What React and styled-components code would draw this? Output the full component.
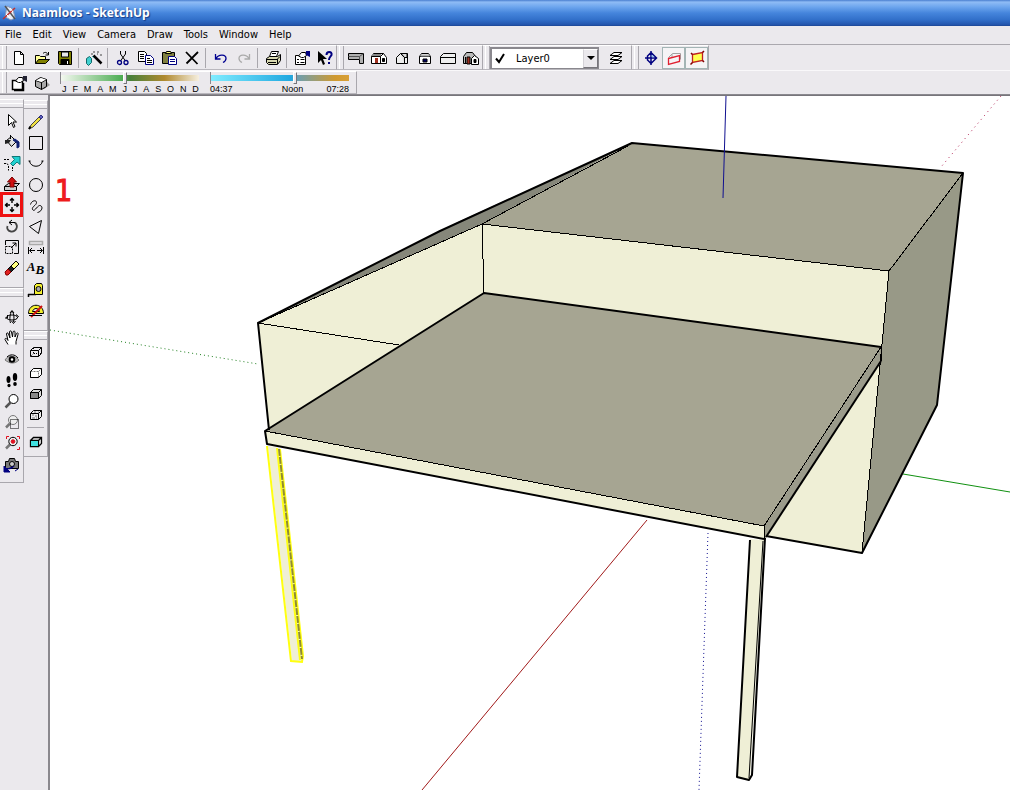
import React, { useState } from "react";
import styled, { createGlobalStyle } from "styled-components";

const GlobalStyle = createGlobalStyle`
  * {
    box-sizing: border-box;
  }
  body {
    margin: 0;
    font-family: "DejaVu Sans Condensed", "DejaVu Sans", sans-serif;
    font-size: 11px;
    color: #000;
  }
  button, select {
    font: inherit;
    color: inherit;
  }
`;

const Window = styled.div`
  display: flex;
  flex-direction: column;
  height: 100vh;
  overflow: hidden;
  background: #ebe9ed;
`;

const TitleBar = styled.header`
  display: flex;
  align-items: center;
  gap: 4px;
  height: 26px;
  flex: none;
  padding: 0 2px;
  background: linear-gradient(
    #4a7fd0 0%,
    #8fbcf5 8%,
    #6ea6ee 26%,
    #4585dc 50%,
    #3270ca 75%,
    #2456ae 94%,
    #1d4694 100%
  );
`;

const Title = styled.h1`
  margin: 0;
  font-family: "Open Sans", sans-serif;
  font-size: 12px;
  line-height: 16px;
  font-weight: 700;
  color: #fff;
  text-shadow: 1px 1px 1px #173c86;
`;

const MenuBar = styled.nav`
  display: flex;
  flex: none;
  gap: 1px;
  height: 19px;
  border-bottom: 1px solid #aaa8ae;
`;

const MenuItem = styled.button`
  border: none;
  background: none;
  padding: 0 5px;
  line-height: 18px;
`;

const ToolbarRow = styled.div`
  display: flex;
  flex: none;
  height: ${({ $height }) => $height}px;
  border-bottom: 1px solid ${({ $last }) => ($last ? "#8a888e" : "#f9f8fa")};
`;

const Toolbar = styled.div`
  display: flex;
  align-items: center;
  padding: 0 ${({ $end }) => $end || 0}px 0 2px;
  border-top: 1px solid #fff;
  border-right: 1px solid #a9a7ad;
  border-bottom: 1px solid #b9b7bd;

  &::before {
    content: "";
    align-self: stretch;
    width: 3px;
    border-left: 1px solid #fff;
    border-right: 1px solid #a9a7ad;
  }
`;

const Tool = styled.button`
  position: relative;
  display: flex;
  align-items: center;
  justify-content: center;
  width: 23px;
  height: ${({ $rail }) => ($rail ? 21 : 22)}px;
  flex: none;
  padding: 0;
  border: 1px solid ${({ $pressed }) => ($pressed ? "#a3b5b5" : "transparent")};
  background: ${({ $pressed }) => ($pressed ? "#f5f4f6" : "none")};

  &::after {
    content: "";
    display: ${({ $marked }) => ($marked ? "block" : "none")};
    position: absolute;
    inset: -3px -1px;
    border: 3px solid #ee1111;
  }
`;

const Separator = styled.span`
  width: ${({ $wide }) => ($wide ? "auto" : "1px")};
  height: ${({ $wide }) => ($wide ? "1px" : "20px")};
  margin: ${({ $wide }) => ($wide ? "2px 3px 3px" : "0 3px 0 2px")};
  background: #a9a7ad;
  flex: none;
`;

const Glyph = styled.svg`
  display: block;
  width: 16px;
  height: 16px;
  flex: none;
  overflow: visible;
  fill: none;
  stroke: #000;
`;

const LayerBox = styled.label`
  display: flex;
  align-items: center;
  width: 109px;
  height: 22px;
  margin-right: 5px;
  border: 1px solid #8a888e;
  border-top-width: 2px;
  border-left-width: 2px;
  background: #fff;
`;

const LayerSelect = styled.select`
  appearance: none;
  flex: 1;
  min-width: 0;
  height: 18px;
  padding: 0 0 0 8px;
  border: none;
  background: none;
  outline: none;
`;

const DropArrow = styled.span`
  display: flex;
  align-items: center;
  justify-content: center;
  width: 15px;
  height: 19px;
  background: #ebe9ed;
  border: 1px solid #77757b;
  border-top-color: #fff;
  border-left-color: #d5d3d8;

  &::after {
    content: "";
    border: 4px solid transparent;
    border-top-color: #000;
    border-bottom: none;
  }
`;

const ShadowSlider = styled.label`
  display: flex;
  flex-direction: column;
  width: 139px;
  margin-left: ${({ $gap }) => $gap}px;
`;

const Range = styled.input`
  appearance: none;
  width: 100%;
  height: 12px;
  margin: 0;
  background: ${({ $track }) => $track} 0 3px / 100% 6px no-repeat;
  border-left: 1px solid #8a888e;

  &::-webkit-slider-thumb {
    appearance: none;
    width: 4px;
    height: 12px;
    background: #ebe9ed;
    border: 1px solid #fff;
    border-right-color: #77757b;
    border-bottom-color: #77757b;
  }
`;

const Scale = styled.span`
  display: flex;
  justify-content: space-between;
  padding-left: ${({ $inset }) => $inset}px;
  font-family: "Liberation Sans", sans-serif;
  font-size: 9px;
  line-height: 10px;
`;

const Body = styled.div`
  display: flex;
  flex: 1;
  min-height: 0;
`;

const Rail = styled.aside`
  display: flex;
  flex-direction: column;
  width: ${({ $width }) => $width}px;
  flex: none;
  padding-top: ${({ $top }) => $top}px;
`;

const RailGroup = styled.div`
  display: flex;
  flex-direction: column;
  padding-bottom: ${({ $end }) => $end}px;
  border-top: 1px solid #fff;
  border-right: 1px solid #a9a7ad;
  border-bottom: 1px solid #a9a7ad;

  &::before {
    content: "";
    height: 3px;
    margin: 3px 0 ${({ $lead }) => $lead}px;
    border-top: 1px solid #fff;
    border-bottom: 1px solid #a9a7ad;
  }
`;

const Viewport = styled.main`
  flex: 1;
  min-width: 0;
  overflow: hidden;
  background: #fff;
  border-top: 1px solid #77757b;
  border-left: 2px solid #8a888e;
`;

const Drawing = styled.svg`
  display: block;
  width: 100%;
  height: 100%;
`;

const cubeFront = "M2.5 6.5h8v6h-8zM2.5 6.5l3-3h8v6l-3 3M10.5 6.5l3-3";

const glyphs = {
  app: (
    <>
      <path d="M5 1l6 3 2 9-4 2-6-3z" fill="#e8eef8" stroke="#8899bb" />
      <path d="M3 1l10 13" stroke="#555" strokeWidth="1.5" />
      <path d="M13 3L1 14" stroke="#c03030" strokeWidth="1.5" />
      <path d="M8 3l3 4M4 9l4 4" stroke="#fff" />
    </>
  ),
  newFile: <path d="M3.5 1.5h6l3 3v10h-9zM9.5 1.5v3h3" fill="#fff" />,
  open: (
    <>
      <path d="M1.5 13.5v-8h4l1 1h5v3" fill="#ffff99" />
      <path d="M1.5 13.5l3-4h11l-4 4z" fill="#808000" />
      <path d="M9 3.5c2-2 4-1 5 1M14.5 2v3h-3" />
    </>
  ),
  save: (
    <>
      <path d="M1.5 1.5h13v13h-12l-1-1z" fill="#808000" />
      <path d="M4.5 2h7v5h-7z" fill="#e8e8e8" />
      <path d="M4 9.5h8v5H4z" fill="#000" />
      <path d="M10 11h1v3h-1z" fill="#fff" stroke="none" />
    </>
  ),
  wand: (
    <>
      <path d="M0.5 8.5l3-2 2 2v4l-3 3-2-2z" fill="#40d0d0" stroke="#106868" />
      <path d="M7.5 5.5l8 8" strokeWidth="2.5" />
      <path d="M8 1v2M12 1v2M5 4h2M14 5h2M11 4h1" stroke="#444" />
      <path d="M6 6l2 2" stroke="#40a0a0" />
    </>
  ),
  cut: (
    <>
      <path d="M5.5 1v3l5 7M10.5 1v3l-5 7" />
      <circle cx="4.5" cy="12.5" r="2" stroke="#000080" strokeWidth="1.3" />
      <circle cx="11" cy="12.5" r="2" stroke="#000080" strokeWidth="1.3" />
    </>
  ),
  copy: (
    <>
      <path d="M0.5 1.5h6l2 2v8h-8z" fill="#fff" />
      <path d="M2 4.5h4M2 6.5h4M2 8.5h4" />
      <path d="M7.5 5.5h5l3 3v6h-8z" fill="#fff" stroke="#000080" />
      <path d="M9 8.5h3M9 10.5h5M9 12.5h5" />
    </>
  ),
  paste: (
    <>
      <path d="M1.5 2.5h12v11h-12z" fill="#808040" />
      <path d="M4.5 3.5l1-2h4l1 2z" fill="#ffff80" />
      <path d="M7.5 6.5h6l2 2v6h-8z" fill="#fff" stroke="#000080" />
      <path d="M9 9.5h5M9 11.5h5" stroke="#000080" />
    </>
  ),
  remove: <path d="M2 2l11.5 12M14 2L2.500 13.500" strokeWidth="1.8" />,
  undo: <path d="M2.5 4v5h5M3 8.500c3-5 10-4 10 0 0 2-1 3-3 4" stroke="#000090" strokeWidth="1.3" />,
  redo: <path d="M13.5 4v5h-5M13 8.500c-3-5-10-4-10 0 0 2 1 3 3 4" stroke="#aaa" strokeWidth="1.3" />,
  print: (
    <>
      <path d="M4.5 6.5l2-5h7l-2 5z" fill="#fff" />
      <path d="M1.5 8.5l3-2h8l3-2v6l-3 4h-9l-2-2z" fill="#d8d8b0" />
      <path d="M2 9.5h10l3-3M12.5 9v5M3 12.5h8M7 3.5h4" />
    </>
  ),
  props: (
    <>
      <path d="M1.5 5.5h10v9h-10z" fill="#fff" />
      <path d="M3 9.5h2M6.5 9.5h4M3 12.5h2M6.5 12.5h4" />
      <path d="M4.5 6l3-3.500h4l1 3-3 2h-2z" fill="#fff" />
      <path d="M12 1h4v6l-4-2z" fill="#000080" stroke="none" />
    </>
  ),
  propsDark: (
    <>
      <path d="M1.5 5.5h10v9h-10z" fill="#fff" strokeWidth="1.5" />
      <path d="M12.5 8v7.500H3" strokeWidth="1.5" />
      <path d="M4.5 6l3-3.500h4l1 3-3 2h-2z" fill="#fff" />
      <path d="M12 1h4v6l-4-2z" fill="#223" stroke="none" />
    </>
  ),
  help: (
    <>
      <path d="M1 1v12l3-3 2 5 2-1-2-5h4z" fill="#000" stroke="none" />
      <path d="M9.5 5c0-4 6-4 5 0-1 2-2.500 2-2.500 5M12 12v2" stroke="#000080" strokeWidth="2" />
    </>
  ),
  viewSlab: (
    <>
      <path d="M0.5 3.5h15v10h-4v-4h-11z" fill="#b0b0b0" />
      <path d="M0.5 6.5h11v3M11.5 6.5l4-3" stroke="#555" />
    </>
  ),
  viewHouse: (
    <>
      <path d="M0.5 6.5l2-3h10l3 4v6h-15zM0.5 6.5h9l3-3M9.5 6.5v7" fill="#fff" />
      <path d="M1 4h9v2H1z" fill="#888" stroke="none" />
      <path d="M4 8h3v5H4z" fill="#a03020" stroke="none" />
      <path d="M11.5 8.5h2v3h-2z" fill="#000" />
    </>
  ),
  viewSide: (
    <>
      <path d="M2.5 13.5v-6l4-4h7v10z" fill="#eee" />
      <path d="M6.500 3.500l4 4v6M7 3.500h6v4h-2.500z" fill="#ddd" />
    </>
  ),
  viewFront: (
    <>
      <path d="M2.5 6.5l2-3h7l2 3v7h-11zM2.5 6.5h11" fill="#fff" />
      <path d="M3.5 4.5h9v2h-9z" fill="#aaa" stroke="none" />
      <path d="M6 9h4v3H6z" fill="#000060" />
    </>
  ),
  viewBack: <path d="M0.5 6.5l3-3h12v10h-15zM0.5 7.5h15" fill="#eee" />,
  viewAll: (
    <>
      <path d="M0.5 6.5l3-4h6l3 4v7h-12z" fill="#bbb" />
      <path d="M8.5 8.5l3-3 4 3v6h-7z" fill="#fff" />
      <path d="M4 7h3v7H4z" fill="#a03020" />
      <path d="M11 9.5h2v3h-2zM2.5 7v6" fill="#000" />
    </>
  ),
  check: <path d="M4 8.5l3 3.5 5-8" strokeWidth="2" />,
  layers: (
    <>
      <path d="M2 13.5h8l4-3H6z" fill="#fff" />
      <path d="M2 9.5h8l4-3H6z" fill="#fff" />
      <path d="M2 5.5h8l4-3H6z" fill="#fff" />
    </>
  ),
  section: (
    <>
      <path d="M8 1v14M2 8h12M8 2.5l5.5 5.5L8 13.500 4.500 10V6z" stroke="#000080" strokeWidth="1.5" />
      <path d="M8.700 4.500l3 2.700h-3z" fill="#8fc0e8" stroke="none" />
    </>
  ),
  sectionPlane: (
    <>
      <path d="M2.5 7.5l4-4h8v6M6 4v3" stroke="#a0a0a0" />
      <path d="M2.5 8.5l11-3v6l-11 3z" stroke="#e02030" strokeWidth="1.3" />
    </>
  ),
  sectionCut: (
    <>
      <path d="M3.500 4.500l10-2v8l-10 2z" fill="#ffff50" stroke="#c02020" strokeWidth="1.3" />
      <path d="M1.500 14.500l2-2M13.500 2.500l1.500-1.500M13.500 10.500l1.500 1.500M2 3l1.500 1.500" stroke="#800000" strokeWidth="1.5" />
    </>
  ),
  shadowCube: (
    <>
      <path d="M10 14l6-4-3-3-3 2z" fill="#999" stroke="none" />
      <path d="M1.5 5.5l5-3 6 2v7l-5 3-6-3z" fill="#aaa" />
      <path d="M1.5 5.5l6 2 5-3M7.5 7.5v7" />
      <path d="M2 5.5l5-2.500 5 1.500-4.500 2.500z" fill="#fff" stroke="none" />
    </>
  ),
  select: <path d="M4.5 1.5v11l3-3 2 5 1.5-1-2-4.500h3.500z" fill="#fff" />,
  paint: (
    <>
      <path d="M2.5 6.5l5-4 5 5-5 5z" fill="#e0e0e0" />
      <path d="M11 5l4 3v5l-2 1v-5l-4-3z" fill="#102070" stroke="#102070" />
      <path d="M1 6h6l-2 3-4 1z" fill="#222" stroke="none" />
      <path d="M6.5 1v4" />
    </>
  ),
  followMe: (
    <>
      <path d="M0 4.500h6M8.500 9v7M0 8.500h3l1.500 2v5" strokeDasharray="2 1" />
      <path d="M6.500 8.500l4-4-2.500-3h8v8l-3-2.500-4 4z" fill="#20d0d0" stroke="#107878" />
    </>
  ),
  pushPull: (
    <>
      <path d="M0.5 10.5l4-3h11l-3 3v4h-12zM0.5 10.5h12" fill="#ccc" />
      <path d="M8 1l4.5 5H10v5H6V6H3.5z" fill="#d01010" stroke="#700" />
    </>
  ),
  move: (
    <path d="M8 2v4M8 10v4M2 8h4M10 8h4M6 3.5L8 1.500l2 2M6 12.500l2 2 2-2M3.500 6l-2 2 2 2M12.500 6l2 2-2 2" strokeWidth="1.4" />
  ),
  rotate: (
    <>
      <path d="M11 4.500c4 4 1 9.500-4 9-3-.3-4.500-3-3.500-5.500" stroke="#444" strokeWidth="1.800" />
      <path d="M5 4.500h6M8 2L5 4.500 8 7" />
    </>
  ),
  scale: (
    <>
      <path d="M1.5 6v-4.500h13v13H10" />
      <path d="M1.5 7.5h7v7h-7z" strokeDasharray="2 1" />
      <path d="M7 9l5-5M8.5 4h3.500v3.500" />
    </>
  ),
  eraser: (
    <>
      <path d="M6 7l6-6 3 3-6 6z" fill="#ffff80" />
      <path d="M3 10l4-4 3 3-4 4z" fill="#222" />
      <path d="M1 12l3-3 3 3-3 3H2z" fill="#e02020" stroke="#800" />
    </>
  ),
  orbit: (
    <>
      <ellipse cx="8" cy="8.500" rx="5.500" ry="2.500" />
      <path d="M6.500 14c-1-3-1-9 1.500-12 2 2 2.500 7 1.500 11M6 4l2-2.500L10 4M7.500 12l2 2.500 2-2.500M12 5.500l2.500 2-2 2M3.500 6v3H1" />
    </>
  ),
  pan: (
    <path
      d="M4 14.5L1 9.500c0-2 2-1 3 1L2.500 4c0-1.500 1.500-1.500 2 0L6 8 5.500 2c0-1.500 2-1.500 2 0L8.500 7 9 2c.5-1.500 2-1 2 0v5l1.500-3.500c.5-1 2-1 1.500 1L12 11.500v3"
      fill="#fff"
    />
  ),
  look: (
    <>
      <path d="M1 9c3-5 9-5 14 0-4 4-9 4-14 0z" fill="#bbb" stroke="#777" />
      <circle cx="8" cy="8.500" r="2.300" fill="#fff" strokeWidth="2" />
      <path d="M3 6c3-3 8-3 11 1" />
    </>
  ),
  walk: (
    <g fill="#000" stroke="none">
      <ellipse cx="4.500" cy="7.500" rx="2" ry="3.500" />
      <ellipse cx="5" cy="13.500" rx="1.600" ry="1.800" />
      <ellipse cx="11" cy="5" rx="2.200" ry="4" />
      <ellipse cx="11" cy="12" rx="1.800" ry="2" />
    </g>
  ),
  zoom: (
    <>
      <path d="M6.5 9.5l-5 5" stroke="#555" strokeWidth="2.5" />
      <circle cx="9.5" cy="6" r="4.5" fill="#fff" />
    </>
  ),
  zoomWindow: (
    <>
      <path d="M6 9.5l-4 4" stroke="#777" strokeWidth="2.5" />
      <circle cx="9" cy="6" r="4.5" fill="#eee" stroke="#777" />
      <path d="M6.5 5.5h8v9h-8z" strokeDasharray="1 1" />
    </>
  ),
  zoomExtents: (
    <>
      <path d="M6 9.5l-4 4" stroke="#777" strokeWidth="2.5" />
      <circle cx="9" cy="6.5" r="4.2" fill="#eee" />
      <circle cx="9" cy="6.5" r="1.8" fill="#e01020" stroke="#e01020" />
      <path d="M2.5 4V1.500H5M13 1.500h2.500V4M15.500 12v2.500H13" stroke="#e01020" />
    </>
  ),
  previous: (
    <>
      <path d="M1.5 5.5h3l1-3h5l1 3h3v7h-13z" fill="#777" />
      <circle cx="8" cy="8" r="2.5" fill="#ccc" />
      <path d="M0 10v6h6zM2 13c5 0 7-1 8-3M11 15l3-2" fill="#000080" stroke="#000080" />
    </>
  ),
  pencil: (
    <>
      <path d="M1 15l2-4 9-9 2 2-9 9z" fill="#f0e040" stroke="#444" />
      <path d="M11 3l2-2 2 2-2 2z" fill="#6060c0" stroke="#303080" />
      <path d="M1 15l1.5-2.500" strokeWidth="2" />
    </>
  ),
  rect: <path d="M1.5 1.5h13v13h-13z" />,
  arc: <path d="M1.5 5c1 7 12 7 13 0M0.5 5h2M13.5 5h2" />,
  circle: <circle cx="8" cy="8" r="6.5" />,
  freehand: <path d="M2.500 6.500c1-4 6-5 6-2 0 3-5 4-4 7 2 3 4-3 7-4 4 0 3 6-2 7" />,
  polygon: <path d="M13.5 1.5l-12 6 9 7z" />,
  dimension: (
    <>
      <path d="M1.500 1.500h13v3h-13z" stroke="#aaa" strokeWidth="1.5" />
      <path d="M0.5 7v7M15.5 7v7M2 10.5h5M9 10.5h5M4 8l-2.500 2.500L4 13M12 8l2.500 2.500L12 13" />
    </>
  ),
  tape: (
    <>
      <path d="M0 12.500h8M0.500 12v3" strokeWidth="1.5" />
      <path d="M6.500 12.500v-9l2-2h5l1 2v9z" fill="#f4f030" />
      <circle cx="10.5" cy="7" r="2.5" fill="#aaa" />
    </>
  ),
  protractor: (
    <>
      <path d="M0.5 10.5c0-11 15-11 15 0zM4.5 8.500h7c-1-4-6-4-7 0z" fill="#f4f030" />
      <path d="M14 3L3 14" stroke="#d01010" strokeWidth="2" />
      <path d="M1 12.5h13" />
    </>
  ),
  cubeXray: (
    <>
      <path d={cubeFront} />
      <path d="M5.5 4v5.500h8M5.500 9.500l-3 3" strokeDasharray="1 1" />
    </>
  ),
  cubeHidden: (
    <>
      <path d={cubeFront} fill="#fff" stroke="#777" strokeDasharray="2 1" />
      <path d="M2.5 6.500v6h8l3-3v-6h-8l-3 3" />
    </>
  ),
  cubeShaded: (
    <>
      <path d={cubeFront} fill="#ddd" />
      <path d="M2.5 6.5h8v6h-8z" fill="#888" />
    </>
  ),
  cubeTexture: (
    <>
      <path d={cubeFront} fill="#eee" />
      <path d="M4 8h2M7 9h2M4 11h3M8 11h1M6 5h2M10 5h1" stroke="#777" />
    </>
  ),
  cubeCyan: (
    <>
      <path d={cubeFront} fill="#eee" strokeWidth="1.3" />
      <path d="M3 7h7v5H3z" fill="#40e0e0" stroke="none" />
    </>
  ),
};

const standardTools = [
  ["newFile", "New"],
  ["open", "Open"],
  ["save", "Save"],
  null,
  ["wand", "Make Component"],
  null,
  ["cut", "Cut"],
  ["copy", "Copy"],
  ["paste", "Paste"],
  ["remove", "Erase"],
  null,
  ["undo", "Undo"],
  ["redo", "Redo"],
  null,
  ["print", "Print"],
  null,
  ["props", "Model Info"],
  ["help", "Context Help"],
];
const viewTools = [
  ["viewSlab", "Iso"],
  ["viewHouse", "Top"],
  ["viewSide", "Front"],
  ["viewFront", "Right"],
  ["viewBack", "Back"],
  ["viewAll", "Left"],
];
const shadowTools = [
  ["propsDark", "Shadow Settings"],
  ["shadowCube", "Display Shadows"],
];
const modifyTools = [
  ["select", "Select"],
  ["paint", "Paint Bucket"],
  ["followMe", "Follow Me"],
  ["pushPull", "Push/Pull"],
  ["move", "Move"],
  ["rotate", "Rotate"],
  ["scale", "Scale"],
  ["eraser", "Eraser"],
];
const cameraTools = [
  ["orbit", "Orbit"],
  ["pan", "Pan"],
  ["look", "Look Around"],
  ["walk", "Walk"],
  ["zoom", "Zoom"],
  ["zoomWindow", "Zoom Window"],
  ["zoomExtents", "Zoom Extents"],
  ["previous", "Previous"],
];
const drawTools = [
  ["pencil", "Line"],
  ["rect", "Rectangle"],
  ["arc", "Arc"],
  ["circle", "Circle"],
  ["freehand", "Freehand"],
  ["polygon", "Polygon"],
  ["dimension", "Dimensions"],
  ["text", "Text"],
  ["tape", "Tape Measure"],
  ["protractor", "Protractor"],
];
const styleTools = [
  ["cubeXray", "Wireframe"],
  ["cubeHidden", "Hidden Line"],
  ["cubeShaded", "Shaded"],
  ["cubeTexture", "Shaded With Textures"],
  null,
  ["cubeCyan", "X-Ray"],
];

const menus = ["File", "Edit", "View", "Camera", "Draw", "Tools", "Window", "Help"];

const TextMark = styled.span`
  display: flex;
  font-family: "Liberation Serif", serif;
  font-size: 13px;
  line-height: 14px;
  font-style: italic;
  font-weight: 700;
`;

const LowLetter = styled.span`
  padding-top: 3px;
`;

const Icon = ({ name }) => {
  if (name === "text") {
    return (
      <TextMark>
        A<LowLetter>B</LowLetter>
      </TextMark>
    );
  }
  return (
    <Glyph viewBox="0 0 16 16" aria-hidden="true">
      {glyphs[name]}
    </Glyph>
  );
};

const ToolList = ({ items, rail, marked }) =>
  items.map((item, i) =>
    item ? (
      <Tool key={item[0]} type="button" aria-label={item[1]} $rail={rail} $marked={marked === item[0]}>
        <Icon name={item[0]} />
      </Tool>
    ) : (
      <Separator key={i} $wide={rail} />
    )
  );

const Scene = () => (
  <Drawing viewBox="50 96 960 694" preserveAspectRatio="xMinYMin slice" role="img" aria-label="Model">
    <g fill="none">
      <path d="M50 330L258 364" stroke="#208020" strokeDasharray="1 3" />
      <path d="M903 474L1010 492" stroke="#109010" />
      <path d="M1001 96L941 167" stroke="#b02050" strokeDasharray="1 4" />
      <path d="M647 520L422 790" stroke="#a01818" />
      <path d="M708 533L699 790" stroke="#101090" strokeDasharray="1 3" />
    </g>

    <g stroke="none">
      <path d="M258 323L460 221 632 143 482 224z" fill="#86877a" />
      <path d="M632 143L963 173 889 271 482 224z" fill="#a6a592" />
      <path d="M963 173L937 405 862 553 889 271z" fill="#989987" />
      <path d="M482 224L889 271 862 553 766 536 484 300z" fill="#efefd6" />
      <path d="M258 323L482 224 484 294 269 430z" fill="#efefd6" />
      <path d="M484 293L881 347 764 526 265 431z" fill="#a6a592" />
      <path d="M265 431L764 526V539L267 444z" fill="#efefd6" />
      <path d="M881 347V361L765 539 764 526z" fill="#9b9b8b" />
      <path d="M750 539L764 540 750 780 737 777z" fill="#efefd6" />
      <path d="M268 446L280 448 302 661 292 661z" fill="#efefd6" />
    </g>

    <g fill="none" stroke="#000" shapeRendering="crispEdges">
      <path d="M258 323L482 224 628 146M482 224L889 271 963 173M889 271L862 553" />
      <path d="M482 224L484 293M258 323L399 345" />
      <path d="M265 431L764 526 881 347M764 526V539" />
      <path d="M881 347V361" />
    </g>

    <g fill="none" stroke="#000" strokeWidth="2" strokeLinejoin="round">
      <path d="M269 430L258 323 440 231 632 143 963 173 937 405 862 553 766 536" />
      <path d="M881 347L484 293 265 431 267 444 764 539" />
      <path d="M881 361L766 537" />
      <path d="M750 540L737 777 749 780 752 775 765 538" />
      <path d="M763 541L749 778" strokeWidth="1" />
    </g>

    <g fill="none" stroke="#ffff10" strokeWidth="2">
      <path d="M267 446L291 661 302 662 303 656 280 449" />
      <path d="M277 448L300 660" />
      <path d="M279 449L302 659" stroke="#908c30" strokeDasharray="7 1" />
    </g>

    <path d="M726 96L723 198" fill="none" stroke="#101090" />
    <text
      x="55"
      y="201"
      fill="#ee1c1c"
      stroke="#ee1c1c"
      fontFamily="'DejaVu Sans Condensed', 'DejaVu Sans', sans-serif"
      fontSize="30"
    >
      1
    </text>
  </Drawing>
);

const App = () => {
  const [month, setMonth] = useState(46);
  const [hour, setHour] = useState(61);

  return (
    <Window>
      <GlobalStyle />
      <TitleBar>
        <Icon name="app" />
        <Title>Naamloos - SketchUp</Title>
      </TitleBar>
      <MenuBar>
        {menus.map((menu) => (
          <MenuItem key={menu} type="button">
            {menu}
          </MenuItem>
        ))}
      </MenuBar>
      <ToolbarRow $height={26}>
        <Toolbar>
          <ToolList items={standardTools} />
        </Toolbar>
        <Toolbar>
          <ToolList items={viewTools} />
        </Toolbar>
        <Toolbar $end={4}>
          <LayerBox>
            <Icon name="check" />
            <LayerSelect aria-label="Layer">
              <option>Layer0</option>
            </LayerSelect>
            <DropArrow />
          </LayerBox>
          <Tool type="button" aria-label="Layers">
            <Icon name="layers" />
          </Tool>
        </Toolbar>
        <Toolbar>
          <Tool type="button" aria-label="Section Plane">
            <Icon name="section" />
          </Tool>
          <Tool type="button" aria-label="Display Section Planes" $pressed>
            <Icon name="sectionPlane" />
          </Tool>
          <Tool type="button" aria-label="Display Section Cuts" $pressed>
            <Icon name="sectionCut" />
          </Tool>
        </Toolbar>
      </ToolbarRow>
      <ToolbarRow $height={24} $last>
        <Toolbar $end={7}>
          <ToolList items={shadowTools} />
          <ShadowSlider $gap={7}>
            <Range
              type="range"
              aria-label="Month"
              value={month}
              onChange={(e) => setMonth(e.target.value)}
              $track="linear-gradient(90deg, #f4f8f0, #4fae55 44%, #48803a 50%, #b08a30 75%, #f6efe0)"
            />
            <Scale $inset={2}>
              {"JFMAMJJASOND".split("").map((m, i) => (
                <span key={i}>{m}</span>
              ))}
            </Scale>
          </ShadowSlider>
          <ShadowSlider $gap={11}>
            <Range
              type="range"
              aria-label="Time"
              value={hour}
              onChange={(e) => setHour(e.target.value)}
              $track="linear-gradient(90deg, #80ecff, #20a8e0 58%, #6f9fae 63%, #d09a30 90%, #d8a038)"
            />
            <Scale $inset={0}>
              <span>04:37</span>
              <span>&nbsp;</span>
              <span>Noon</span>
              <span>07:28</span>
            </Scale>
          </ShadowSlider>
        </Toolbar>
      </ToolbarRow>
      <Body>
        <Rail $width={24} $top={4}>
          <RailGroup $end={9} $lead={2}>
            <ToolList items={modifyTools} rail marked="move" />
          </RailGroup>
          <RailGroup $end={8} $lead={9}>
            <ToolList items={cameraTools} rail />
          </RailGroup>
        </Rail>
        <Rail $width={24} $top={5}>
          <RailGroup $end={9} $lead={2}>
            <ToolList items={drawTools} rail />
          </RailGroup>
          <RailGroup $end={4} $lead={1}>
            <ToolList items={styleTools} rail />
          </RailGroup>
        </Rail>
        <Viewport>
          <Scene />
        </Viewport>
      </Body>
    </Window>
  );
};

export default App;
